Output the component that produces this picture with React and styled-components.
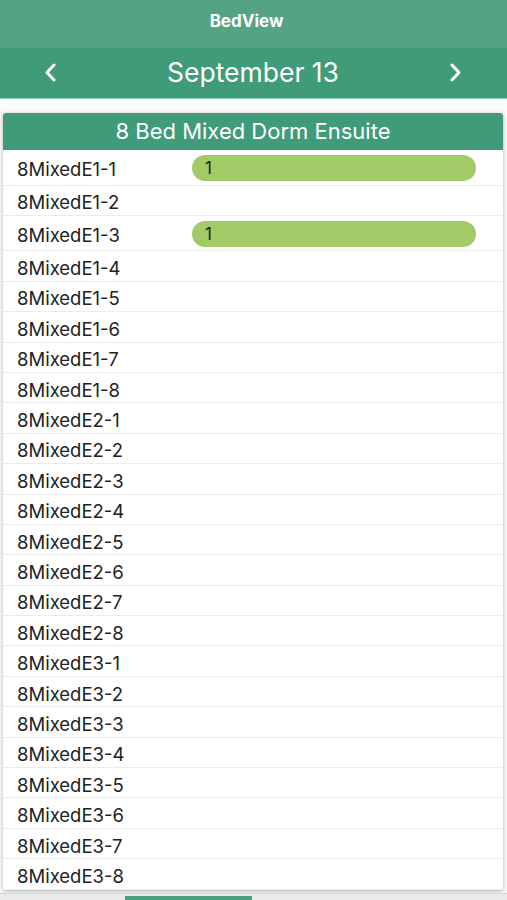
import React from 'react'
import styled, { createGlobalStyle } from 'styled-components'

const GlobalStyle = createGlobalStyle`
  html, body {
    margin: 0;
    padding: 0;
    background: #f7f7f7;
    font-family: Inter, "Liberation Sans", Arial, sans-serif;
  }
`

const beds = [
  { name: '8MixedE1-1', count: 1 },
  { name: '8MixedE1-2' },
  { name: '8MixedE1-3', count: 1 },
  { name: '8MixedE1-4' },
  { name: '8MixedE1-5' },
  { name: '8MixedE1-6' },
  { name: '8MixedE1-7' },
  { name: '8MixedE1-8' },
  { name: '8MixedE2-1' },
  { name: '8MixedE2-2' },
  { name: '8MixedE2-3' },
  { name: '8MixedE2-4' },
  { name: '8MixedE2-5' },
  { name: '8MixedE2-6' },
  { name: '8MixedE2-7' },
  { name: '8MixedE2-8' },
  { name: '8MixedE3-1' },
  { name: '8MixedE3-2' },
  { name: '8MixedE3-3' },
  { name: '8MixedE3-4' },
  { name: '8MixedE3-5' },
  { name: '8MixedE3-6' },
  { name: '8MixedE3-7' },
  { name: '8MixedE3-8' },
]

function Chevron({ dir }) {
  const d = dir === 'left' ? 'M10 2 L3 9.5 L10 17' : 'M3 2 L10 9.5 L3 17'
  return (
    <svg width="13" height="19" viewBox="0 0 13 19">
      <path d={d} fill="none" stroke="#fff" strokeWidth="3" strokeLinecap="round" strokeLinejoin="round" />
    </svg>
  )
}

export default function App() {
  return (
    <Page>
      <GlobalStyle />
      <TopBar>BedView</TopBar>
      <DateBar>
        <NavButton><Chevron dir="left" /></NavButton>
        <DateLabel>September 13</DateLabel>
        <NavButton><Chevron dir="right" /></NavButton>
      </DateBar>
      <Content>
        <Card>
          <CardHeader>8 Bed Mixed Dorm Ensuite</CardHeader>
          {beds.map((b) => (
            <Row key={b.name} $tall={!!b.count}>
              <BedName>{b.name}</BedName>
              {b.count && <Booking>{b.count}</Booking>}
            </Row>
          ))}
        </Card>
      </Content>
      <TabStrip>
        <TabIndicator />
      </TabStrip>
    </Page>
  )
}

const Page = styled.div`
  width: 507px;
  height: 900px;
  overflow: hidden;
  display: flex;
  flex-direction: column;
  background: #f7f7f7;
  & > * {
    flex-shrink: 0;
  }
`

const TopBar = styled.div`
  height: 48px;
  background: #55a385;
  color: #fff;
  font-weight: 700;
  font-size: 17px;
  display: flex;
  align-items: center;
  justify-content: center;
  padding-bottom: 6px;
  padding-right: 14px;
  box-sizing: border-box;
`

const DateBar = styled.div`
  height: 51px;
  background: #3f9b78;
  display: flex;
  align-items: center;
  justify-content: space-between;
  padding: 0 45px 0 44px;
  box-sizing: border-box;
  border-bottom: 1px solid #8fcfb2;
`

const NavButton = styled.div`
  display: flex;
  align-items: center;
  padding-bottom: 2px;
`

const DateLabel = styled.div`
  color: #fff;
  font-size: 26.5px;
  padding-bottom: 2px;
`

const Content = styled.div`
  padding: 14px 4px 0 3px;
  background: #fbfbfb;
`

const Card = styled.div`
  background: #fff;
  border-radius: 3px;
  box-shadow: 0 1px 4px rgba(0, 0, 0, 0.3);
  overflow: hidden;
`

const CardHeader = styled.div`
  height: 37px;
  background: #3f9b78;
  color: #fff;
  font-size: 22px;
  display: flex;
  align-items: center;
  justify-content: center;
  padding-bottom: 1px;
  box-sizing: border-box;
`

const Row = styled.div`
  height: ${(p) => (p.$tall ? '35.5px' : '30.4px')};
  box-sizing: border-box;
  border-bottom: 1px solid #ececec;
  display: flex;
  align-items: center;
  padding: 4px 27px 0 14px;
`

const BedName = styled.div`
  width: 175px;
  font-size: 18.5px;
  color: #222;
`

const Booking = styled.div`
  flex: 1;
  height: 26px;
  margin-top: -2px;
  border-radius: 13px;
  background: #a2cb68;
  color: #222;
  font-size: 17px;
  display: flex;
  align-items: center;
  padding-left: 13px;
`

const TabStrip = styled.div`
  flex: 1;
  margin-top: 3px;
  background: #eaeaea;
  border-top: 1px solid #d6d6d6;
  padding-left: 125px;
  padding-top: 2px;
`

const TabIndicator = styled.div`
  width: 127px;
  height: 4px;
  background: #4a9f7f;
`
